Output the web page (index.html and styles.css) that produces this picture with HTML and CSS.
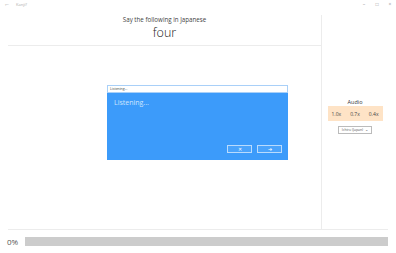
FILE: index.html
```html
<!DOCTYPE html>
<html>
<head>
<meta charset="utf-8">
<link rel="stylesheet" href="styles.css">
</head>
<body>
<div class="app">
  <div class="titlebar">
    <div class="tb-left">
      <span class="back">&#8592;</span>
      <span class="app-name">Kanji?</span>
    </div>
    <div class="tb-right">
      <span class="ctl">&#8211;</span>
      <span class="ctl">&#9633;</span>
      <span class="ctl">&#215;</span>
    </div>
  </div>
  <div class="main">
    <div class="left">
      <div class="prompt">
        <div class="prompt-label">Say the following in Japanese</div>
        <div class="prompt-word">four</div>
      </div>
      <div class="stage"></div>
    </div>
    <div class="right">
      <div class="audio">
        <div class="audio-title">Audio</div>
        <div class="speeds">
          <span>1.0x</span><span>0.7x</span><span>0.4x</span>
        </div>
        <div class="voice">Ichiro (Japan) <span class="chev">&#8964;</span></div>
      </div>
    </div>
  </div>
  <div class="footer">
    <span class="pct">0%</span>
    <div class="bar"></div>
  </div>
</div>
<div class="dialog">
  <div class="dlg-title">Listening...</div>
  <div class="dlg-body">
    <div class="dlg-text">Listening...</div>
    <div class="dlg-actions">
      <span class="dlg-btn">&#10005;</span>
      <span class="dlg-btn">&#10132;</span>
    </div>
  </div>
</div>
</body>
</html>
```
FILE: styles.css
```css
html, body {
  margin: 0;
  padding: 0;
  background: #ffffff;
  font-family: "Open Sans", "Noto Sans", sans-serif;
  color: #222;
}
.app {
  width: 396px;
  height: 253px;
  display: flex;
  flex-direction: column;
}
.titlebar {
  height: 15px;
  display: flex;
  justify-content: space-between;
  align-items: flex-start;
  padding-top: 1px;
  box-sizing: border-box;
}
.tb-left {
  display: flex;
  align-items: center;
  gap: 6px;
  padding-left: 4px;
}
.back {
  font-size: 6px;
  color: #999;
  line-height: 7px;
}
.app-name {
  font-size: 4px;
  color: #aaa;
  line-height: 7px;
}
.tb-right {
  display: flex;
  gap: 9px;
  padding-right: 4px;
}
.ctl {
  font-size: 5px;
  color: #999;
  line-height: 7px;
  width: 4px;
  text-align: center;
}
.main {
  height: 214px;
  display: flex;
  padding-left: 8px;
}
.left {
  width: 313px;
  border-right: 1px solid #ececec;
  display: flex;
  flex-direction: column;
}
.prompt {
  height: 31px;
  border-bottom: 1px solid #ececec;
  text-align: center;
  padding-top: 1px;
  box-sizing: border-box;
}
.prompt-label {
  font-size: 6.2px;
  line-height: 8px;
  color: #444;
}
.prompt-word {
  font-size: 12.5px;
  line-height: 15px;
  font-weight: 300;
  color: #222;
  margin-top: 1px;
}
.stage {
  flex: 1;
}
.right {
  width: 66px;
  display: flex;
  flex-direction: column;
}
.audio {
  margin-top: 84px;
  display: flex;
  flex-direction: column;
  align-items: center;
}
.audio-title {
  font-size: 5.5px;
  line-height: 7px;
  color: #333;
}
.speeds {
  width: 55px;
  height: 15px;
  background: #fee3c6;
  display: flex;
  justify-content: space-between;
  align-items: center;
  padding: 0 4px;
  box-sizing: border-box;
  font-size: 5px;
  color: #444;
}
.voice {
  margin-top: 5px;
  border: 1px solid #bbb;
  font-size: 3.5px;
  line-height: 6px;
  padding: 0 3px;
  color: #555;
  display: flex;
  gap: 2px;
  align-items: center;
}
.chev {
  font-size: 4px;
}
.footer {
  border-top: 1px solid #ececec;
  margin: 0 8px;
  display: flex;
  align-items: center;
  gap: 5px;
  padding-top: 6px;
}
.pct {
  font-size: 8px;
  color: #555;
  margin-left: -1px;
  width: 13px;
}
.bar {
  flex: 1;
  height: 9px;
  background: #cccccc;
}
.dialog {
  position: absolute;
  left: 107px;
  top: 85px;
  width: 181px;
  display: flex;
  flex-direction: column;
}
.dlg-title {
  height: 8px;
  background: #fff;
  border: 1px solid #a9d0f8;
  box-sizing: border-box;
  font-size: 3.5px;
  line-height: 6px;
  padding-left: 2px;
  color: #444;
}
.dlg-body {
  height: 67px;
  background: #3c9bfa;
  display: flex;
  flex-direction: column;
  justify-content: space-between;
  padding: 5px 6px 7px 7px;
  box-sizing: border-box;
}
.dlg-text {
  font-size: 7px;
  color: #cfe5fd;
}
.dlg-actions {
  display: flex;
  justify-content: flex-end;
  gap: 5px;
}
.dlg-btn {
  width: 25px;
  height: 8px;
  border: 1px solid #b9dbfd;
  box-sizing: border-box;
  background: #4aa3fb;
  color: #fff;
  font-size: 5px;
  line-height: 6px;
  text-align: center;
}
```
